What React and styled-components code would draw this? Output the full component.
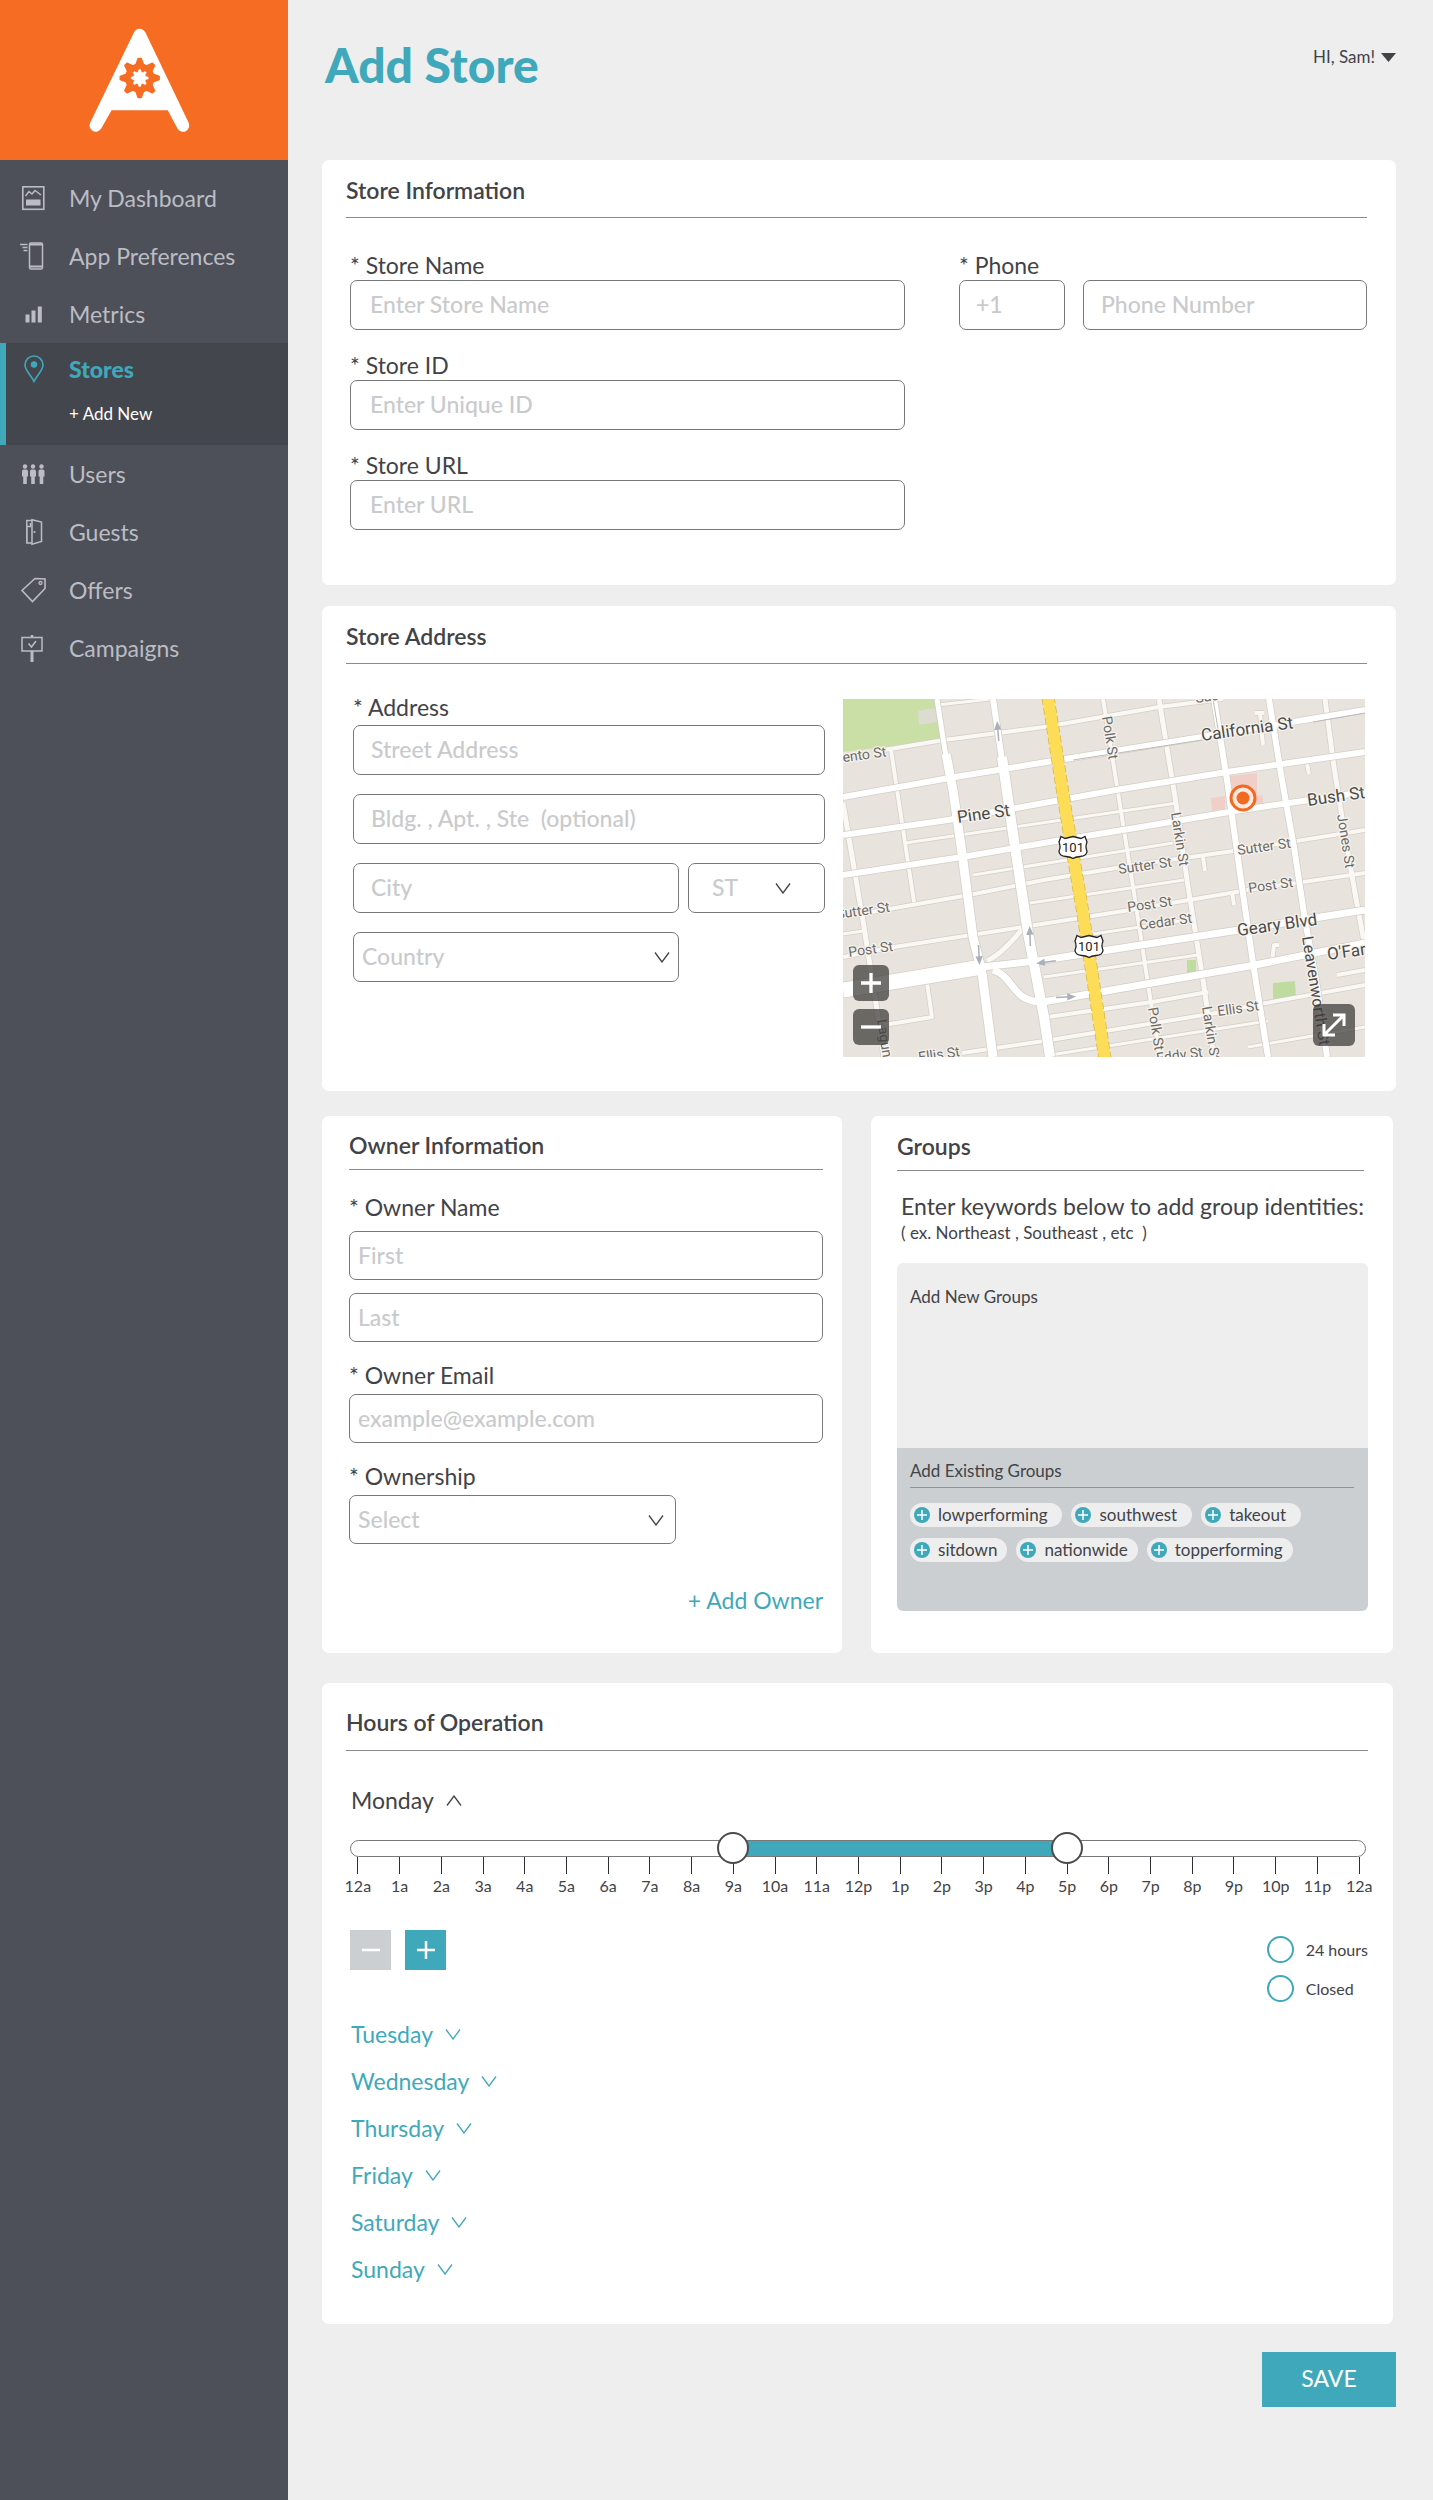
import React, { useState } from "react";
import styled, { createGlobalStyle, css } from "styled-components";

const teal = "#3fa9bb";
const ink = "#424347";
const rule = "#8a8b8d";

const GlobalStyle = createGlobalStyle`
  *, *::before, *::after { box-sizing: border-box; }
  body {
    margin: 0;
    background: #eeeeee;
    color: ${ink};
    font-family: Lato, "Open Sans", sans-serif;
    font-size: 23px;
    line-height: 24px;
  }
  input, select, textarea, button { font: inherit; color: inherit; }
  h1, h2, p, ul, ol { margin: 0; padding: 0; }
  ul, ol { list-style: none; }
  a { color: inherit; text-decoration: none; }
`;

/* ---------- shell ---------- */

const Page = styled.div`
  display: flex;
  min-height: 100vh;
`;

const Sidebar = styled.aside`
  flex: 0 0 288px;
  background: #4d5059;
`;

const Brand = styled.a`
  display: block;
  height: 160px;
  background: #f66c22;
  svg { display: block; }
`;

const Nav = styled.nav`
  padding-top: 9px;
`;

const NavLink = styled.a`
  display: flex;
  align-items: center;
  gap: 21px;
  height: ${(p) => (p.$active ? 52 : 58)}px;
  padding-left: ${(p) => (p.$active ? 14 : 20)}px;
  color: ${(p) => (p.$active ? teal : "#bbbdc3")};
  font-weight: ${(p) => (p.$active ? 900 : 400)};
`;

const ActiveItem = styled.li`
  height: 102px;
  border-left: 6px solid ${teal};
  background: #43464c;
`;

const SubLink = styled.a`
  display: block;
  margin: 7px 0 0 63px;
  color: #fff;
  font-size: 17px;
`;

const Main = styled.main`
  flex: 1;
  min-width: 0;
  padding: 0 37px 92px 34px;
`;

const TopBar = styled.header`
  display: flex;
  justify-content: space-between;
  align-items: flex-start;
  height: 160px;
  padding-top: 38px;
`;

const Title = styled.h1`
  padding-left: 3px;
  color: ${teal};
  font-size: 48px;
  line-height: 54px;
  font-weight: 900;
`;

const UserMenu = styled.button`
  display: flex;
  align-items: center;
  gap: 6px;
  margin-top: 9px;
  padding: 0;
  border: 0;
  background: none;
  font-size: 17px;
  line-height: 20px;
`;

/* ---------- cards ---------- */

const Card = styled.section`
  border-radius: 7px;
  background: #fff;
  padding: ${(p) => p.$pad};
`;

const Heading = styled.h2`
  border-bottom: 1px solid ${rule};
  padding-bottom: ${(p) => p.$below || 15}px;
  font-size: 23px;
  line-height: 24px;
  font-weight: 600;
`;

const Stack = styled.div`
  display: flex;
  flex-direction: column;
  gap: ${(p) => p.$gap}px;
`;

const Upper = styled(Stack)`
  margin-bottom: 25px;
`;

const Lower = styled(Stack)`
  margin-right: 3px;
`;

const InfoGrid = styled.div`
  display: grid;
  grid-template-columns: 555fr 408fr;
  gap: 54px;
  padding: 35px 0 0 4px;
`;

const AddressGrid = styled.div`
  display: grid;
  grid-template-columns: 472fr 522fr;
  gap: 18px;
  align-items: start;
  padding: 31px 2px 0 7px;
`;

const TwoUp = styled.div`
  display: grid;
  grid-template-columns: 1fr 1fr;
  gap: 29px;
`;

const Columns = styled.div`
  display: grid;
  grid-template-columns: ${(p) => p.$cols};
  gap: ${(p) => p.$gap}px;
`;

const OwnerName = styled.div`
  display: grid;
  gap: 13px;
  padding-top: 25px;
`;

/* ---------- form parts ---------- */

const Label = styled.label`
  display: block;
  margin-bottom: ${(p) => p.$below || 3}px;
  white-space: pre;
`;

const box = css`
  display: block;
  width: 100%;
  height: ${(p) => p.$h || 50}px;
  border: 1px solid #77787b;
  border-radius: 7px;
  background: #fff;
  padding: 0 ${(p) => p.$pad || 19}px 2px;
`;

const Input = styled.input`
  ${box}
  &::placeholder { color: #c9cacc; opacity: 1; font-weight: 500; }
`;

const SelectWrap = styled.div`
  position: relative;
  width: ${(p) => p.$w || "100%"};
  svg {
    position: absolute;
    right: ${(p) => p.$arrow}px;
    top: 50%;
    margin-top: -5px;
    pointer-events: none;
  }
`;

const SelectBox = styled.select`
  ${box}
  appearance: none;
  color: #c9cacc;
  font-weight: 500;
`;

const AddOwner = styled.button`
  display: block;
  margin: 44px 0 0 auto;
  padding: 0;
  border: 0;
  background: none;
  color: ${teal};
`;

/* ---------- map ---------- */

const MapFrame = styled.div`
  position: relative;
  margin-top: 4px;
  > svg { display: block; width: 100%; height: auto; }
`;

const MapButtons = styled.div`
  position: absolute;
  left: 10px;
  bottom: 12px;
  display: grid;
  gap: 8px;
`;

const MapButton = styled.button`
  display: grid;
  place-items: center;
  width: ${(p) => p.$size || 36}px;
  height: ${(p) => p.$size || 36}px;
  padding: 0;
  border: 0;
  border-radius: 6px;
  background: rgba(62, 61, 60, 0.74);
`;

const ExpandSpot = styled.div`
  position: absolute;
  right: 10px;
  bottom: 11px;
`;

/* ---------- groups ---------- */

const GroupsIntro = styled.div`
  padding: 23px 0 20px 4px;
  p:first-child { white-space: nowrap; }
`;

const Hint = styled.p`
  margin-top: 5px;
  font-size: 17px;
  line-height: 20px;
  white-space: pre;
`;

const GroupBox = styled.div`
  margin-right: -4px;
  border-radius: 6px;
  overflow: hidden;
  font-size: 17px;
  line-height: 20px;
`;

const NewGroups = styled.div`
  display: flex;
  flex-direction: column;
  height: 185px;
  padding: 24px 13px 10px;
  background: #eeeeee;
  textarea {
    flex: 1;
    border: 0;
    padding: 4px 0;
    background: transparent;
    resize: none;
    outline: 0;
  }
`;

const ExistingGroups = styled.div`
  height: 163px;
  padding: 13px 14px 0 13px;
  background: #cbcfd2;
`;

const ExistingTitle = styled.p`
  padding-bottom: 6px;
  border-bottom: 1px solid #8f9497;
`;

const ChipRow = styled.div`
  display: flex;
  gap: 9px;
  margin-top: ${(p) => p.$top}px;
`;

const Chip = styled.button`
  display: flex;
  align-items: center;
  gap: 8px;
  height: 24px;
  padding: 0 ${(p) => p.$end}px 0 4px;
  border: 0;
  border-radius: 12px;
  background: #eeeeee;
`;

/* ---------- hours ---------- */

const HoursBody = styled.div`
  padding: 37px 0 0 5px;
`;

const DayButton = styled.button`
  display: flex;
  align-items: center;
  gap: 12px;
  padding: 0;
  border: 0;
  background: none;
  color: ${(p) => (p.$open ? ink : teal)};
`;

const Slider = styled.div`
  position: relative;
  z-index: 1;
  display: flex;
  align-items: center;
  height: 32px;
  margin: 20px 0 0 -1px;
`;

const Track = styled.div`
  width: 100%;
  height: 17px;
  margin-right: 2px;
  border: 1px solid #77787b;
  border-radius: 9px;
  padding: 0 8px;
`;

const Fill = styled.div`
  height: 100%;
  background: ${teal};
`;

const Range = styled.input`
  position: absolute;
  left: -8px;
  right: -7px;
  top: 0;
  width: calc(100% + 15px);
  height: 32px;
  margin: 0;
  appearance: none;
  background: none;
  pointer-events: none;
  &::-webkit-slider-thumb {
    appearance: none;
    width: 32px;
    height: 32px;
    border: 2px solid #4a4b4d;
    border-radius: 50%;
    background: #fff;
    pointer-events: auto;
  }
`;

const Ticks = styled.ol`
  display: grid;
  grid-template-columns: repeat(25, 1fr);
  margin: -7px -12px 0 -14px;
  font-size: 16px;
  line-height: 20px;
  li {
    display: flex;
    flex-direction: column;
    align-items: center;
    gap: 2px;
  }
  li::before {
    content: "";
    width: 1px;
    height: 17px;
    background: #2f3032;
  }
`;

const HoursActions = styled.div`
  display: flex;
  align-items: flex-start;
  gap: 14px;
  margin: 34px 0 20px -1px;
`;

const StepButton = styled.button`
  display: grid;
  place-items: center;
  width: 41px;
  height: 40px;
  padding: 0;
  border: 0;
  background: ${(p) => (p.$muted ? "#cbcfd2" : teal)};
`;

const RadioList = styled.div`
  display: grid;
  gap: 12px;
  margin: 6px 0 0 auto;
  font-size: 16px;
`;

const RadioLabel = styled.label`
  display: flex;
  align-items: center;
  gap: 12px;
  height: 27px;
  input {
    appearance: none;
    width: 27px;
    height: 27px;
    margin: 0;
    border: 2px solid ${teal};
    border-radius: 50%;
    background: #fff;
  }
  input:checked { background: ${teal}; box-shadow: inset 0 0 0 4px #fff; }
`;

const SaveButton = styled.button`
  display: block;
  width: 134px;
  height: 55px;
  margin: 28px 0 0 auto;
  padding: 0 0 4px;
  border: 0;
  background: ${teal};
  color: #fff;
`;

/* ---------- drawings ---------- */

function gearPath(cx, cy, outer, root, teeth) {
  const pts = [];
  const step = (Math.PI * 2) / teeth;
  for (let i = 0; i < teeth; i++) {
    const a = i * step - Math.PI / 2;
    [[-0.34, root], [-0.1, outer], [0.1, outer], [0.34, root]].forEach(([k, r]) => {
      pts.push(`${(cx + r * Math.cos(a + k * step)).toFixed(2)} ${(cy + r * Math.sin(a + k * step)).toFixed(2)}`);
    });
  }
  return `M${pts.join("L")}Z`;
}

function Logo() {
  return (
    <svg width="288" height="160" viewBox="0 0 288 160" aria-hidden="true">
      <path d="M139.7 35L183 125.500L171.500 104H108L95.800 125.500Z" fill="#fff" stroke="#fff" strokeWidth="12.500" strokeLinejoin="round" />
      <path d={gearPath(139.7, 78, 19.5, 14, 8)} fill="#f66c22" stroke="#f66c22" strokeWidth="1.500" strokeLinejoin="round" />
      <path d={gearPath(139.7, 78, 8.5, 6, 8)} fill="#fff" stroke="#fff" strokeWidth="0.800" strokeLinejoin="round" />
    </svg>
  );
}

function Chevron({ up, color = ink }) {
  return (
    <svg width="16" height="11" viewBox="0 0 16 11" fill="none" stroke={color} strokeWidth="1.300" aria-hidden="true">
      <path d={up ? "M1 10.500L8 1L15 10.500" : "M1 0.500L8 10L15 0.500"} />
    </svg>
  );
}

function PlusMinus({ minus, size = 18, weight = 2.5 }) {
  return (
    <svg width={size} height={size} viewBox="0 0 18 18" stroke="#fff" strokeWidth={weight} aria-hidden="true">
      <path d={minus ? "M0 9H18" : "M0 9H18M9 0V18"} />
    </svg>
  );
}

const person = (x) => (
  <g key={x}>
    <circle cx={x} cy="6.500" r="2.200" />
    <path d={`M${x - 3} 11.500Q${x - 3} 9.500 ${x - 1.2} 9.500H${x + 1.2}Q${x + 3} 9.500 ${x + 3} 11.500V16.500H${x + 1.8}V24H${x - 1.8}V16.500H${x - 3}Z`} />
  </g>
);

const iconShapes = {
  dashboard: (
    <>
      <rect x="2.800" y="2.800" width="21" height="22.500" strokeWidth="1.600" />
      <path d="M5.500 12L9 7.500L12 10L15 6.500L21 11" strokeWidth="1.400" />
      <rect x="6" y="15.500" width="14.500" height="6" fill="currentColor" stroke="none" />
    </>
  ),
  app: (
    <>
      <rect x="9.500" y="1" width="13" height="26" rx="1.500" strokeWidth="1.500" />
      <path d="M9.500 2.500H22.500M9.500 24.500H22.500" strokeWidth="2.200" />
      <path d="M0 2.500H7.500M2.500 5.500H7.500M3.500 8.500H7.500" strokeWidth="1.500" />
    </>
  ),
  metrics: (
    <g fill="currentColor" stroke="none">
      <rect x="5.500" y="14.500" width="4" height="8" />
      <rect x="11.500" y="10.500" width="4" height="12" />
      <rect x="17.800" y="6.500" width="4" height="16" />
    </g>
  ),
  pin: (
    <>
      <path d="M14 26.500C11 20 5 15.500 5 10A9 9 0 0 1 23 10C23 15.500 17 20 14 26.500Z" strokeWidth="1.600" />
      <circle cx="14" cy="9.500" r="3.200" fill="currentColor" stroke="none" />
    </>
  ),
  users: <g fill="currentColor" stroke="none">{[5, 13, 21.5].map(person)}</g>,
  guests: (
    <>
      <path d="M12 1.800L21.500 4V23.500L12 26.300Z" strokeWidth="1.500" />
      <path d="M12 2.500H6.800V25H12M6.800 8.500H10.500V5M7 10V24" strokeWidth="1.500" />
      <circle cx="14.500" cy="14" r="1.100" fill="currentColor" stroke="none" />
    </>
  ),
  offers: (
    <>
      <path d="M15 2.500L25 3V12.500L12.500 25.500L2 14.500Z" strokeWidth="1.600" />
      <circle cx="20.500" cy="7" r="1.500" strokeWidth="1.300" />
    </>
  ),
  campaigns: (
    <>
      <rect x="2" y="3.500" width="20" height="13.500" strokeWidth="1.500" />
      <path d="M8.500 9.500L11.500 13L16 7" strokeWidth="1.500" />
      <path d="M12 17V28" strokeWidth="3" />
      <path d="M12 1V3.500" strokeWidth="2.500" />
    </>
  ),
};

function NavIcon({ name }) {
  return (
    <svg width="28" height="28" viewBox="0 0 28 28" fill="none" stroke="currentColor" aria-hidden="true">
      {iconShapes[name]}
    </svg>
  );
}

/* Streets: [path, width] */
const streets = [
  ["M94 6L148 0", 3],
  ["M41 51L101 41L201 28L316 8L380 0", 4],
  ["M62 144L219 121L334 104", 3],
  ["M0 218L126 196L201 181L291 166L398 151L522 131", 4],
  ["M130 176L330 144", 3],
  ["M187 204L341 181", 3],
  ["M0 258L51 248L180 228L287 211L405 191L522 174", 4],
  ["M0 235L20 232", 3],
  ["M250 235L344 221", 3],
  ["M201 278L355 256", 3],
  ["M205 318L309 303L365 293", 4],
  ["M119 354L201 342L373 314L412 306L522 286", 4],
  ["M207 356L425 322", 3],
  ["M405 348L522 328", 3],
  ["M494 276L522 271", 4],
  ["M48 51L71 203", 4],
  ["M0 104L21 228L32 298L41 358", 5],
  ["M84 284L89 318L41 326", 4],
  ["M260 0L273 81L291 194L307 298L317 358", 4],
  ["M316 0L332 98L344 181L360 281L371 358", 5],
  ["M482 0L491 68L501 131L512 194L522 248", 5],
  ["M144 262Q160 254 180 229", 5],
  ["M360 158L362 172", 4],
  ["M389 193L391 206", 4],
  ["M429 262L431 246L436 246", 4],
  ["M464 65L466 75", 4],
  ["M412 14L421 14M417 14L420 46", 4],
];

const mainStreets = [
  ["M371 0L384 81L398 181L410 264L425 358", 6],
  ["M426 0L439 81L451 148L462 221L473 281L484 358", 6],
  ["M94 0L103 58", 5],
  ["M103 55L110 91L119 154L130 238L139 274L150 358", 9],
  ["M150 0L159 61", 6],
  ["M159 58L169 128L185 234L201 318L207 358", 10],
  ["M0 98L112 78L216 61L359 38L522 11", 6],
  ["M0 136L105 121L173 109L273 91L384 73L522 53", 6],
  ["M0 176L119 158L201 144L298 128L398 111L522 93", 6],
  ["M0 291L139 268", 15],
  ["M139 268L201 261L298 246L409 229L522 211", 7],
  ["M150 271C172 278 168 303 200 303L309 284L412 266L522 244", 7],
];

const names = [
  ["California St", 359, 42, -8, 17],
  ["Bush St", 465, 107, -8, 17],
  ["Pine St", 115, 124, -8, 17],
  ["Geary Blvd", 395, 237, -8, 17],
  ["O'Farrell St", 485, 261, -8, 17],
  ["Sutter St", 395, 156, -8, 14],
  ["Sutter St", 276, 175, -8, 14],
  ["Post St", 406, 194, -8, 14],
  ["Post St", 285, 213, -8, 14],
  ["Cedar St", 297, 231, -8, 14],
  ["Ellis St", 375, 317, -8, 14],
  ["Sacramento St", -47, 70, -8, 14],
  ["Sutter St", -6, 220, -8, 14],
  ["Post St", 6, 258, -8, 14],
  ["Ellis St", 76, 363, -8, 14],
  ["Eddy St", 314, 364, -8, 14],
  ["Sac", 353, 4, -8, 14],
  ["Polk St", 259, 18, 81, 14],
  ["Polk St", 305, 309, 81, 14],
  ["Larkin St", 328, 114, 81, 14],
  ["Larkin St", 359, 308, 81, 14],
  ["Jones St", 494, 116, 81, 14],
  ["Leavenworth St", 459, 238, 81, 16],
  ["Laguna St", 34, 321, 81, 14],
];

const arrows = [
  [155, 33, -95], [187, 238, -92], [136, 255, 87], [204, 263, 172], [222, 298, -3],
];

function Shield({ x, y }) {
  return (
    <g transform={`translate(${x} ${y})`}>
      <path d="M-12 -10.500L-8 -8.500L0 -10.500L8 -8.500L12 -10.500L14 -5Q12 0 14 4Q14 9 7 9.500Q2 10 0 11.500Q-2 10 -7 9.500Q-14 9 -14 4Q-12 0 -14 -5Z" fill="#fff" stroke="#222" strokeWidth="1.300" />
      <text textAnchor="middle" y="4.500" fontSize="13" fill="#222">101</text>
    </g>
  );
}

function StreetMap() {
  return (
    <svg viewBox="0 0 522 358" role="img" aria-label="Map of the store location" fontFamily="Roboto, sans-serif" fill="none">
      <rect width="522" height="358" fill="#e8e4dd" />
      <path d="M0 0H93L100 41L0 53Z" fill="#c9dfa6" />
      <path d="M75 12L92 9L94 23L76 26Z" fill="#dcdcd2" />
      <rect x="344" y="261" width="9" height="13" fill="#c0dba0" />
      <path d="M430 284L452 282L453 299L430 302Z" fill="#c0dba0" />
      <path d="M387 77L414 74V96L420 97V110H387Z" fill="#f0cfc9" />
      <path d="M368 99L382 97V110L369 112Z" fill="#f0cfc9" />
      {[streets, mainStreets].map((set, i) => (
        <g key={i} strokeLinejoin="round">
          {set.map(([d, w]) => <path key={d} d={d} stroke="#d3cec6" strokeWidth={w + 1.5} />)}
          {set.map(([d, w]) => <path key={d + w} d={d} stroke={i ? "#ffffff" : "#faf8f4"} strokeWidth={w} />)}
        </g>
      ))}
      <path d="M230 61L359 41M470 23L522 14" stroke="#bdbbb6" />
      <path d="M370 0L375 30" stroke="#bdbbb6" />
      <path d="M205 -2L223 114L239 208L262 360" stroke="#d9b63e" strokeWidth="13" strokeDasharray="7 3" />
      <path d="M205 -2L223 114L239 208L262 360" stroke="#fddc58" strokeWidth="11.500" />
      {arrows.map(([x, y, r]) => (
        <path key={`${x}-${y}`} transform={`translate(${x} ${y}) rotate(${r})`} d="M-9 0H4M3 -2.500L9 0L3 2.500Z" stroke="#a9b0ba" strokeWidth="1.500" fill="#a9b0ba" />
      ))}
      {names.map(([t, x, y, r, s]) => (
        <text
          key={`${t}${x}`}
          transform={`translate(${x} ${y}) rotate(${r})`}
          fontSize={s}
          fill={s > 14 ? "#4b4a48" : "#6b6966"}
          stroke="#f6f3ee"
          strokeWidth="2.500"
          strokeLinejoin="round"
          paintOrder="stroke"
        >
          {t}
        </text>
      ))}
      <Shield x={230} y={148} />
      <Shield x={246} y={247} />
      <circle cx="400" cy="99" r="12" fill="#fbe9e1" stroke="#f26a21" strokeWidth="3" />
      <circle cx="400" cy="99" r="6.500" fill="#f26a21" />
    </svg>
  );
}

function ChipPlus() {
  return (
    <svg width="16" height="16" viewBox="0 0 16 16" aria-hidden="true">
      <circle cx="8" cy="8" r="8" fill={teal} />
      <path d="M3 8H13M8 3V13" stroke="#fff" strokeWidth="1.500" />
    </svg>
  );
}

/* ---------- page ---------- */

const navTop = [["dashboard", "My Dashboard"], ["app", "App Preferences"], ["metrics", "Metrics"]];
const navBottom = [["users", "Users"], ["guests", "Guests"], ["offers", "Offers"], ["campaigns", "Campaigns"]];
const chips = [["lowperforming", "southwest", "takeout"], ["sitdown", "nationwide", "topperforming"]];
const hours = [...Array(25).keys()].map((h) => `${h % 12 || 12}${h % 24 < 12 ? "a" : "p"}`);
const days = ["Tuesday", "Wednesday", "Thursday", "Friday", "Saturday", "Sunday"];

function NavItems({ items }) {
  return items.map(([icon, text]) => (
    <li key={icon}>
      <NavLink href="#"><NavIcon name={icon} />{text}</NavLink>
    </li>
  ));
}

function Field({ id, label, below, ...rest }) {
  return (
    <div>
      <Label htmlFor={id} $below={below}>* {label}</Label>
      <Input id={id} {...rest} />
    </div>
  );
}

function Select({ id, text, w, arrow, label, ...rest }) {
  return (
    <SelectWrap $w={w} $arrow={arrow}>
      <SelectBox id={id} aria-label={label} {...rest}><option>{text}</option></SelectBox>
      <Chevron />
    </SelectWrap>
  );
}

export default function App() {
  const [open, setOpen] = useState(9);
  const [close, setClose] = useState(17);
  const fill = { marginLeft: `${(open / 24) * 100}%`, width: `${((close - open) / 24) * 100}%` };

  return (
    <Page>
      <GlobalStyle />
      <Sidebar>
        <Brand href="#" aria-label="Home"><Logo /></Brand>
        <Nav>
          <ul>
            <NavItems items={navTop} />
            <ActiveItem>
              <NavLink href="#" $active><NavIcon name="pin" />Stores</NavLink>
              <SubLink href="#">+ Add New</SubLink>
            </ActiveItem>
            <NavItems items={navBottom} />
          </ul>
        </Nav>
      </Sidebar>

      <Main>
        <TopBar>
          <Title>Add Store</Title>
          <UserMenu type="button">
            HI, Sam!
            <svg width="15" height="9" viewBox="0 0 15 9" aria-hidden="true"><path d="M0 0H15L7.500 9Z" fill={ink} /></svg>
          </UserMenu>
        </TopBar>

        <Upper $gap={21}>
          <Card $pad="18px 29px 55px 24px">
            <Heading>Store Information</Heading>
            <InfoGrid>
              <Stack $gap={23}>
                <Field id="store-name" label="Store Name" placeholder="Enter Store Name" />
                <Field id="store-id" label="Store ID" placeholder="Enter Unique ID" />
                <Field id="store-url" label="Store URL" placeholder="Enter URL" />
              </Stack>
              <div>
                <Label htmlFor="phone">* Phone</Label>
                <Columns $cols="106px 1fr" $gap={18}>
                  <Input aria-label="Country code" placeholder="+1" $pad={16} />
                  <Input id="phone" type="tel" placeholder="Phone Number" $pad={17} />
                </Columns>
              </div>
            </InfoGrid>
          </Card>

          <Card $pad="18px 29px 34px 24px">
            <Heading>Store Address</Heading>
            <AddressGrid>
              <Stack $gap={19}>
                <Field id="address" label="Address" below={6} placeholder="Street Address" $pad={17} />
                <Input aria-label="Building, apartment or suite" placeholder="Bldg. , Apt. , Ste  (optional)" $pad={17} />
                <Columns $cols="326fr 137fr" $gap={9}>
                  <Input aria-label="City" placeholder="City" $pad={17} />
                  <Select label="State" text="ST" arrow={34} $pad={23} />
                </Columns>
                <Select label="Country" text="Country" w="69%" arrow={9} $pad={8} />
              </Stack>
              <MapFrame>
                <StreetMap />
                <MapButtons>
                  <MapButton type="button" aria-label="Zoom in"><PlusMinus size={20} weight={3} /></MapButton>
                  <MapButton type="button" aria-label="Zoom out"><PlusMinus minus size={20} weight={3} /></MapButton>
                </MapButtons>
                <ExpandSpot>
                  <MapButton type="button" aria-label="Expand map" $size={42}>
                    <svg width="24" height="24" viewBox="0 0 24 24" fill="none" stroke="#fff" strokeWidth="3" aria-hidden="true">
                      <path d="M11 2H22V13M22 2L2 22M2 11V22H13" />
                    </svg>
                  </MapButton>
                </ExpandSpot>
              </MapFrame>
            </AddressGrid>
          </Card>
        </Upper>

        <Lower $gap={30}>
          <TwoUp>
            <Card $pad="17px 19px 39px 27px">
              <Heading $below={12}>Owner Information</Heading>
              <Stack $gap={21}>
                <OwnerName>
                  <Field id="first" label="Owner Name" below={12} placeholder="First" $h={49} $pad={8} />
                  <Input aria-label="Last name" placeholder="Last" $h={49} $pad={8} />
                </OwnerName>
                <Field id="email" label="Owner Email" below={7} type="email" placeholder="example@example.com" $h={49} $pad={8} />
                <div>
                  <Label htmlFor="ownership" $below={7}>* Ownership</Label>
                  <Select id="ownership" text="Select" w="69%" arrow={12} $h={49} $pad={8} />
                </div>
              </Stack>
              <AddOwner type="button">+ Add Owner</AddOwner>
            </Card>

            <Card $pad="18px 29px 42px 26px">
              <Heading $below={12}>Groups</Heading>
              <GroupsIntro>
                <p>Enter keywords below to add group identities:</p>
                <Hint>{"( ex. Northeast , Southeast , etc  )"}</Hint>
              </GroupsIntro>
              <GroupBox>
                <NewGroups>
                  <label htmlFor="new-groups">Add New Groups</label>
                  <textarea id="new-groups" />
                </NewGroups>
                <ExistingGroups>
                  <ExistingTitle>Add Existing Groups</ExistingTitle>
                  {chips.map((row, i) => (
                    <ChipRow key={i} $top={i ? 11 : 15}>
                      {row.map((c) => <Chip type="button" key={c} $end={i ? 10 : 15}><ChipPlus />{c}</Chip>)}
                    </ChipRow>
                  ))}
                </ExistingGroups>
              </GroupBox>
            </Card>
          </TwoUp>

          <Card $pad="27px 25px 43px 24px">
            <Heading $below={16}>Hours of Operation</Heading>
            <HoursBody>
              <DayButton type="button" $open>Monday<Chevron up /></DayButton>
              <Slider>
                <Track><Fill style={fill} /></Track>
                <Range type="range" aria-label="Opening hour" min="0" max="24" value={open} onChange={(e) => setOpen(Math.min(+e.target.value, close))} />
                <Range type="range" aria-label="Closing hour" min="0" max="24" value={close} onChange={(e) => setClose(Math.max(+e.target.value, open))} />
              </Slider>
              <Ticks>{hours.map((h, i) => <li key={i}>{h}</li>)}</Ticks>
              <HoursActions>
                <StepButton type="button" $muted aria-label="Remove hours"><PlusMinus minus /></StepButton>
                <StepButton type="button" aria-label="Add hours"><PlusMinus /></StepButton>
                <RadioList>
                  <RadioLabel><input type="radio" name="monday" />24 hours</RadioLabel>
                  <RadioLabel><input type="radio" name="monday" />Closed</RadioLabel>
                </RadioList>
              </HoursActions>
              <Stack $gap={23}>
                {days.map((d) => (
                  <DayButton type="button" key={d}>{d}<Chevron color={teal} /></DayButton>
                ))}
              </Stack>
            </HoursBody>
          </Card>
        </Lower>
        <SaveButton type="submit">SAVE</SaveButton>
      </Main>
    </Page>
  );
}
